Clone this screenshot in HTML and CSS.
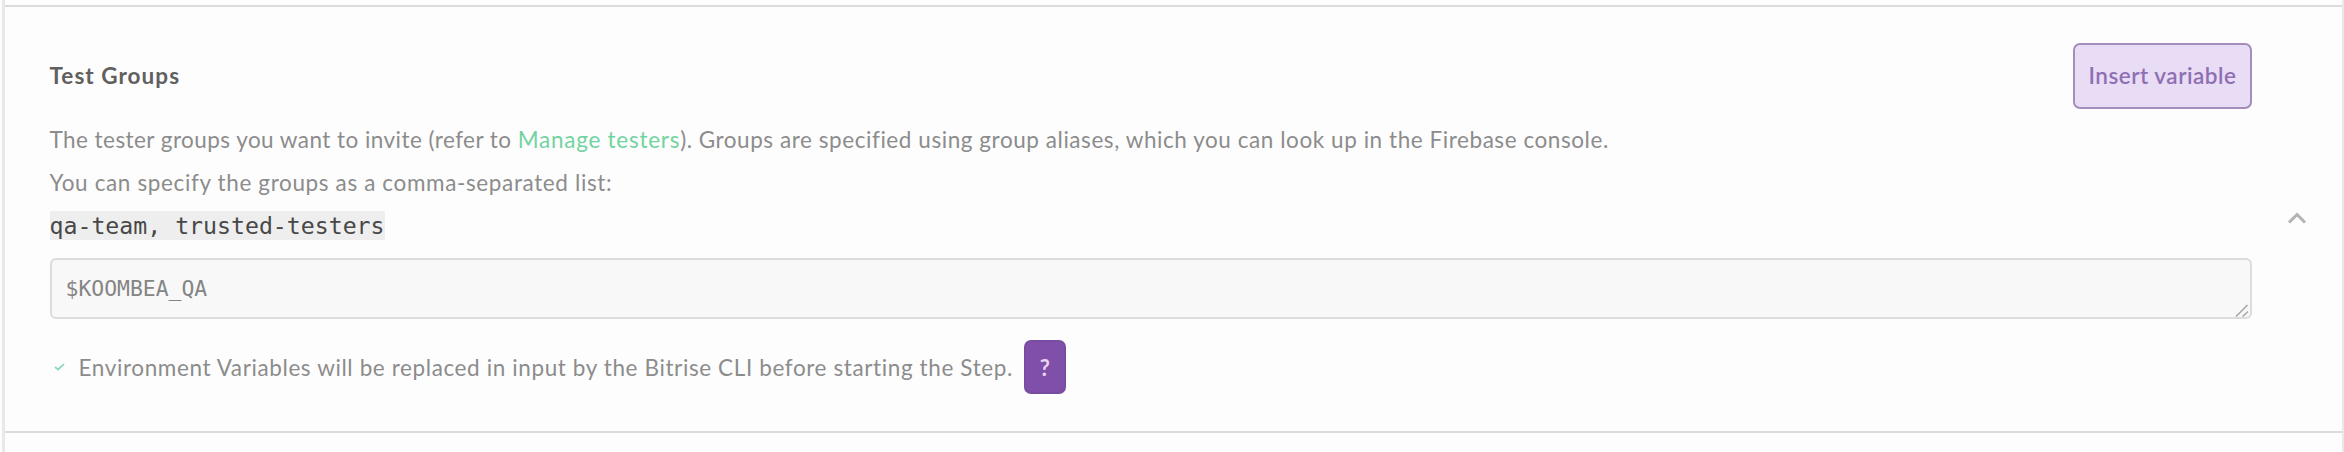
FILE: index.html
```html
<!DOCTYPE html>
<html lang="en">
<head>
<meta charset="utf-8">
<title>Test Groups</title>
<link rel="stylesheet" href="styles.css">
</head>
<body>
<div class="panel">
  <div class="edge"></div>
  <section class="input-row">
    <div class="content">
      <header class="header">
        <h2 class="title">Test Groups</h2>
        <button class="insert" type="button">Insert variable</button>
      </header>
      <p class="desc desc-main">The tester groups you want to invite (refer to <a class="link">Manage testers</a>). <span class="desc-tail">Groups are specified using group aliases, which you can look up in the Firebase console.</span></p>
      <p class="desc desc-list">You can specify the groups as a comma-separated list:</p>
      <p class="desc"><code class="code">qa-team, trusted-testers</code></p>
      <div class="field">
        <span class="value">$KOOMBEA_QA</span>
        <svg class="grip" width="14" height="13" viewBox="0 0 14 13"><path d="M1 12.5L12.5 1M7.5 12.5L13 7.5" /></svg>
      </div>
      <div class="note">
        <svg class="check" width="11" height="8" viewBox="0 0 11 8"><path d="M1 4L4 6.5L10 1.2"/></svg>
        <span class="note-text">Environment Variables will be replaced in input by the Bitrise CLI before starting the Step.</span>
        <button class="help" type="button">?</button>
      </div>
    </div>
    <div class="toggle">
      <svg class="chevron" width="20" height="12" viewBox="0 0 20 12"><path d="M2 10.5L10 2.5L18 10.5"/></svg>
    </div>
  </section>
  <div class="next"></div>
</div>
</body>
</html>
```
FILE: styles.css
```css
* { box-sizing: border-box; }
body { margin: 0; background: #fdfdfd; font-family: Lato, "Open Sans", sans-serif; font-size: 22.5px; color: #8c8c8c; }
.panel { height: 452px; margin-left: 2px; border-left: 3px solid #e8e8e8; border-right: 2px solid #e8e8e8; display: flex; flex-direction: column; overflow: hidden; }
.edge { height: 5px; flex: none; }
.input-row { height: 428px; flex: none; border-top: 2px solid #dcdcdc; border-bottom: 2px solid #dcdcdc; display: flex; }
.content { width: 2247px; padding: 36px 0 0 44.5px; flex: none; }
.header { display: flex; justify-content: space-between; align-items: center; height: 65px; margin-bottom: 10px; }
.title { margin: 0; font-size: 22.5px; font-weight: 700; color: #606060; letter-spacing: 1.05px; }
.insert { width: 179px; height: 66px; padding: 0; border: 2px solid #a48dbb; border-radius: 7px; background: #e9dcf5; color: #8f6fb3; font: 600 22.5px Lato, sans-serif; letter-spacing: 0.5px; }
.desc { margin: 0; height: 43px; line-height: 43px; white-space: nowrap; }
.desc-main { letter-spacing: 0.45px; }
.desc-tail { letter-spacing: 0.56px; }
.desc-list { letter-spacing: 0.63px; }
.link { color: #72d3a0; letter-spacing: 0.75px; }
.code { display: inline-block; height: 29px; line-height: 29px; background: #eeeeee; color: #484848; font-family: "DejaVu Sans Mono", monospace; font-size: 23.2px; }
.field { position: relative; display: flex; align-items: center; height: 61px; margin-top: 11px; padding-left: 14px; border: 2px solid #dcdcdc; border-radius: 6px; background: #f8f8f8; }
.value { font-family: "DejaVu Sans Mono", monospace; font-size: 21.4px; color: #858585; }
.grip { position: absolute; right: 1px; bottom: 0; fill: none; stroke: #a8a8a8; stroke-width: 1.6; }
.note { display: flex; align-items: center; height: 54px; margin-top: 21px; padding-left: 4px; white-space: nowrap; }
.check { fill: none; stroke: #8edbb9; stroke-width: 1.8; margin-right: 14px; }
.note-text { letter-spacing: 0.61px; }
.help { width: 42px; height: 54px; margin-left: 11px; padding: 0; border: 2px solid #784c9f; border-radius: 7px; background: #804fa9; color: #e6d5f3; font: 700 22px Lato, sans-serif; }
.toggle { flex: 1; display: flex; justify-content: center; padding-top: 205px; }
.chevron { fill: none; stroke: #b3b3b3; stroke-width: 3; }
```
